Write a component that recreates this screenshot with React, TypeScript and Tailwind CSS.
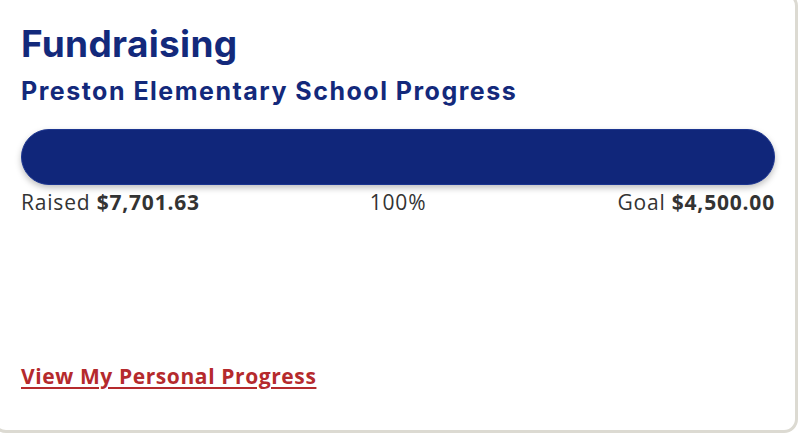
import React from "react";

const raised = 7701.63;
const goal = 4500;

const fmt = (n: number) =>
    "$" + n.toLocaleString("en-US", {minimumFractionDigits: 2, maximumFractionDigits: 2});

const App: React.FC = () => {
    const pct = Math.min(100, Math.round((raised / goal) * 100));

    return (
        <div className="w-[800px] h-[438px] overflow-hidden bg-white">
            {/* card runs slightly off the top-left edge, as in the screenshot */}
            <div className="-ml-[8px] -mt-[8px] w-[806px] h-[441px] rounded-[14px] border-[3px] border-[#dcdad2] bg-white pl-[26px] pr-[20px] pt-[27px] flex flex-col">
                <h1 className="font-['Inter',sans-serif] font-bold text-[37px] leading-[44px] text-[#13297b] tracking-[0.3px]">
                    Fundraising
                </h1>
                <h2 className="mt-[10px] font-['Inter',sans-serif] font-bold text-[25px] leading-[30px] text-[#13297b] tracking-[1.5px]">
                    Preston Elementary School Progress
                </h2>

                {/* progress bar */}
                <div className="mt-[23px] h-[56px] w-[754px] rounded-full bg-[#e8e8e8] shadow-[0_3px_6px_rgba(0,0,0,0.25)]">
                    <div
                        className="h-full rounded-full bg-[#10267a] border border-[#1c3590]"
                        style={{width: `${pct}%`}}
                    />
                </div>

                <div className="mt-[3px] w-[754px] flex items-center justify-between font-['Open_Sans',sans-serif] text-[21px] leading-[28px] text-[#333333] tracking-[0.8px]">
                    <span className="w-[250px]">
                        Raised <b className="font-bold">{fmt(raised)}</b>
                    </span>
                    <span>{pct}%</span>
                    <span className="w-[250px] text-right">
                        Goal <b className="font-bold">{fmt(goal)}</b>
                    </span>
                </div>

                <div className="mt-auto mb-[40px]">
                    <a
                        href="#"
                        className="font-['Open_Sans',sans-serif] font-bold text-[21px] leading-[28px] text-[#b52a2d] underline decoration-2 underline-offset-[3px] tracking-[0.6px]"
                    >
                        View My Personal Progress
                    </a>
                </div>
            </div>
        </div>
    );
};

export default App;
